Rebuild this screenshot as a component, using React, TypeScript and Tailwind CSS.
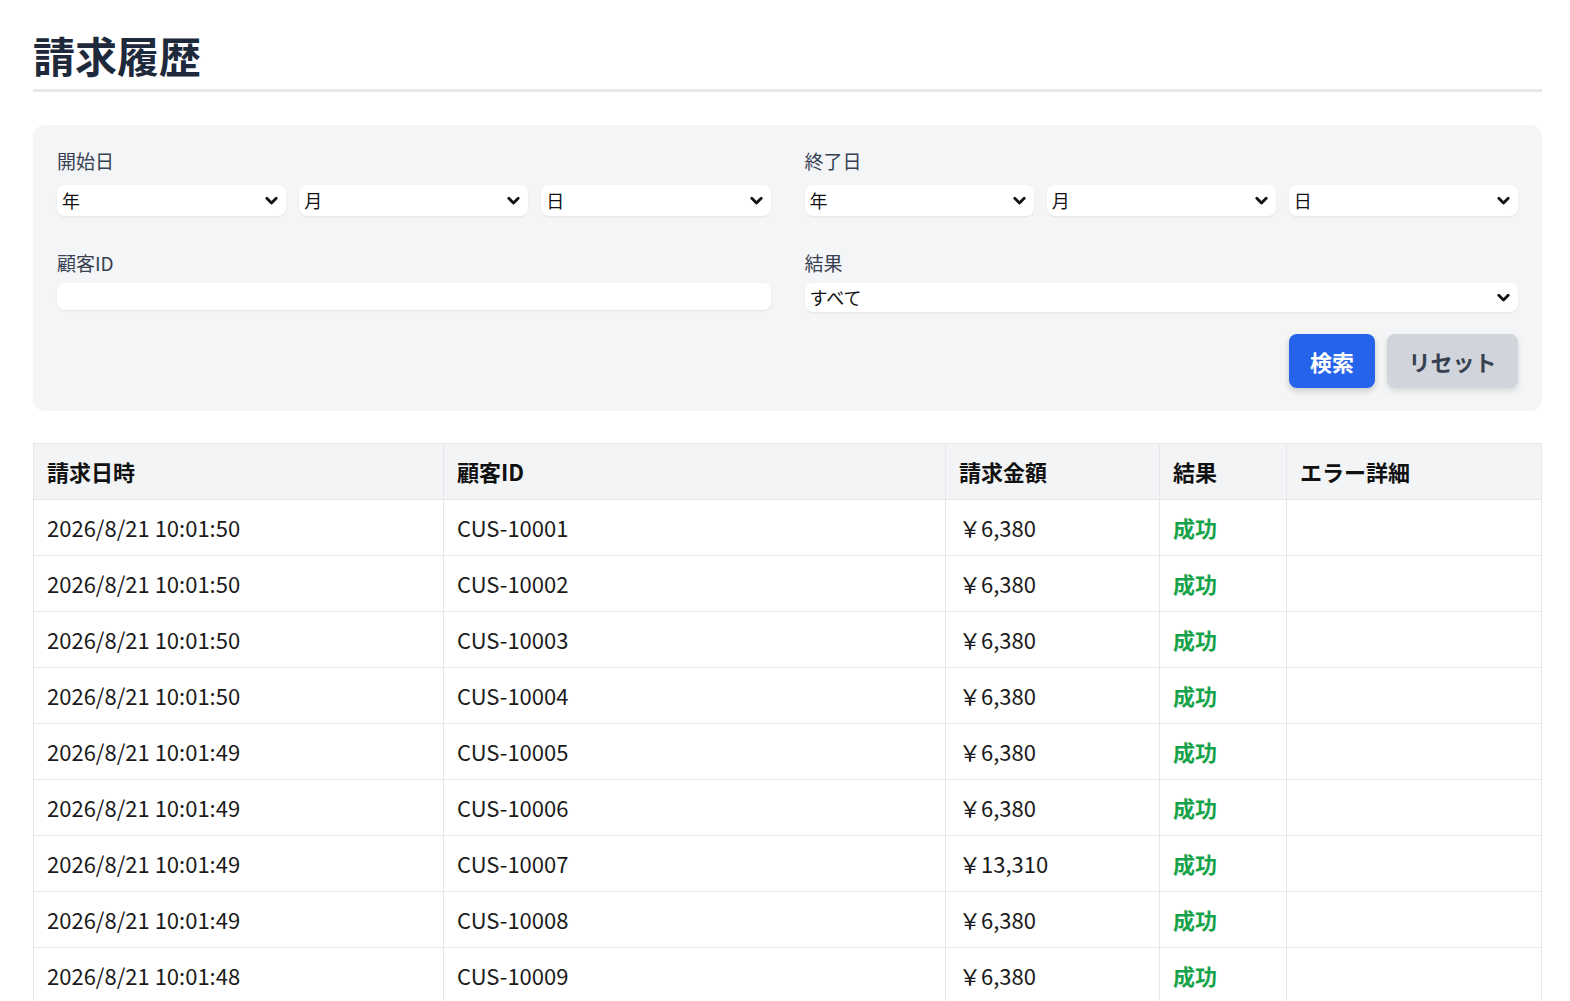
import React from "react";

const font = { fontFamily: '"Noto Sans CJK JP", "Noto Sans", sans-serif' };

function Chevron() {
  return (
    <svg width="13" height="9" viewBox="0 0 13 9" className="pointer-events-none absolute right-[8px] top-1/2 -translate-y-1/2">
      <path d="M1.8 1.8 L6.5 6.6 L11.2 1.8" fill="none" stroke="#111" strokeWidth="2.8" strokeLinecap="round" strokeLinejoin="round" />
    </svg>
  );
}

function Select({ label, h = "h-[31px]" }: { label: string; h?: string }) {
  return (
    <div className={`relative ${h} rounded-lg bg-white shadow-[0_1px_2px_rgba(0,0,0,0.08)]`}>
      <div className="flex h-full items-center pl-[5px] text-[18px] text-[#111]">{label}</div>
      <Chevron />
    </div>
  );
}

const rows = [
  ["2026/8/21 10:01:50", "CUS-10001", "￥6,380"],
  ["2026/8/21 10:01:50", "CUS-10002", "￥6,380"],
  ["2026/8/21 10:01:50", "CUS-10003", "￥6,380"],
  ["2026/8/21 10:01:50", "CUS-10004", "￥6,380"],
  ["2026/8/21 10:01:49", "CUS-10005", "￥6,380"],
  ["2026/8/21 10:01:49", "CUS-10006", "￥6,380"],
  ["2026/8/21 10:01:49", "CUS-10007", "￥13,310"],
  ["2026/8/21 10:01:49", "CUS-10008", "￥6,380"],
  ["2026/8/21 10:01:48", "CUS-10009", "￥6,380"],
];

export default function App() {
  return (
    <div style={font} className="min-h-[1001px] bg-white pl-[33px] pr-[28px]">
      <h1 className="border-b-[3px] border-[#e5e7eb] pt-[31px] pb-[10px] text-[42px] leading-[48px] font-bold text-[#1e293b]">
        請求履歴
      </h1>

      <div className="mt-[33px] rounded-xl bg-[#f4f5f7] px-[24px] pt-[22px] pb-[23px]">
        <div className="grid grid-cols-2 gap-x-[34px]">
          <div>
            <div className="text-[19px] leading-[27px] text-[#374151]">開始日</div>
            <div className="mt-[11px] grid grid-cols-3 gap-[13px]">
              <Select label="年" />
              <Select label="月" />
              <Select label="日" />
            </div>
          </div>
          <div>
            <div className="text-[19px] leading-[27px] text-[#374151]">終了日</div>
            <div className="mt-[11px] grid grid-cols-3 gap-[13px]">
              <Select label="年" />
              <Select label="月" />
              <Select label="日" />
            </div>
          </div>
          <div className="mt-[33px]">
            <div className="text-[19px] leading-[27px] text-[#374151]">顧客ID</div>
            <div className="mt-[7px] h-[27px] rounded-lg bg-white shadow-[0_1px_2px_rgba(0,0,0,0.08)]" />
          </div>
          <div className="mt-[33px]">
            <div className="text-[19px] leading-[27px] text-[#374151]">結果</div>
            <div className="mt-[7px]">
              <Select label="すべて" h="h-[29px]" />
            </div>
          </div>
        </div>
        <div className="mt-[22px] flex justify-end gap-[12px]">
          <button className="h-[54px] w-[86px] rounded-lg bg-[#2563eb] text-[22px] font-bold text-white shadow-[0_3px_6px_rgba(0,0,0,0.18)]">
            検索
          </button>
          <button className="h-[54px] w-[131px] rounded-lg bg-[#d1d5db] text-[22px] font-bold text-[#374151] shadow-[0_3px_6px_rgba(0,0,0,0.12)]">
            リセット
          </button>
        </div>
      </div>

      <table className="mt-[32px] w-full table-fixed border-collapse border border-[#e5e7eb] text-[22px]">
        <colgroup>
          <col className="w-[410px]" />
          <col className="w-[502px]" />
          <col className="w-[214px]" />
          <col className="w-[127px]" />
          <col />
        </colgroup>
        <thead>
          <tr className="h-[56px] bg-[#f3f4f6]">
            {["請求日時", "顧客ID", "請求金額", "結果", "エラー詳細"].map((h) => (
              <th key={h} className="border border-[#e5e7eb] pl-[13px] text-left font-bold text-[#111]">
                {h}
              </th>
            ))}
          </tr>
        </thead>
        <tbody>
          {rows.map((r) => (
            <tr key={r[1]} className="h-[56px] bg-white">
              <td className="border border-[#e5e7eb] pl-[13px] text-[#1a1a1a]">{r[0]}</td>
              <td className="border border-[#e5e7eb] pl-[13px] text-[#1a1a1a]">{r[1]}</td>
              <td className="border border-[#e5e7eb] pl-[13px] text-[#1a1a1a]">{r[2]}</td>
              <td className="border border-[#e5e7eb] pl-[13px] font-bold text-[#16a34a]">成功</td>
              <td className="border border-[#e5e7eb] pl-[13px]"></td>
            </tr>
          ))}
        </tbody>
      </table>
    </div>
  );
}
